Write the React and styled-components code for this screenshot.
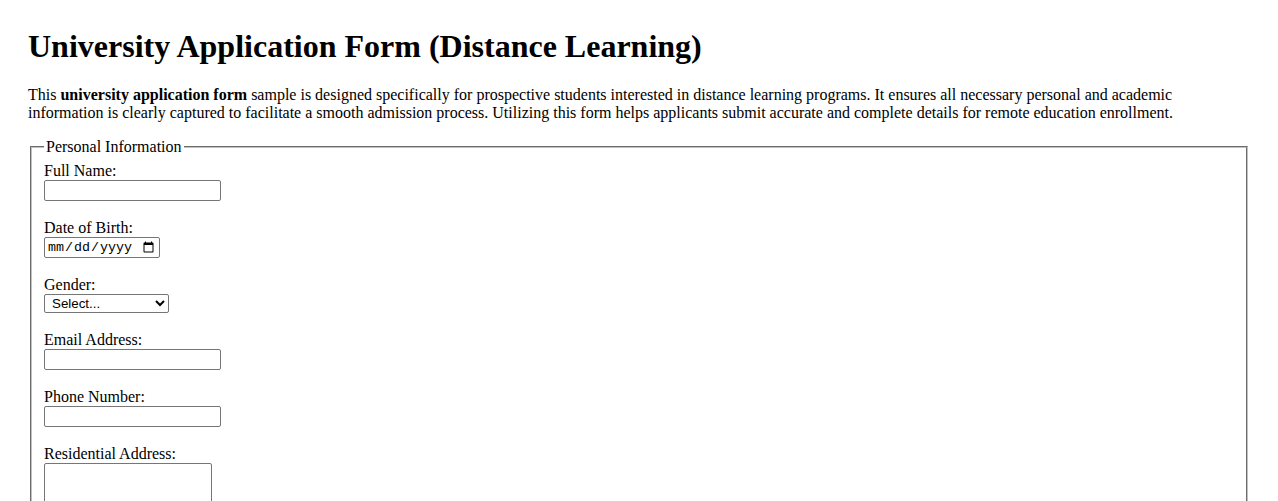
import React from 'react'
import styled, { createGlobalStyle } from 'styled-components'

const GlobalStyle = createGlobalStyle`
  body {
    margin: 0;
    background: #fff;
    color: #000;
    font-family: "Liberation Serif", "Times New Roman", serif;
    font-size: 16px;
  }
`

const personalFields = [
  { id: 'fullName', label: 'Full Name:', kind: 'text' },
  { id: 'dob', label: 'Date of Birth:', kind: 'date' },
  { id: 'gender', label: 'Gender:', kind: 'select' },
  { id: 'email', label: 'Email Address:', kind: 'email' },
  { id: 'phone', label: 'Phone Number:', kind: 'tel' },
  { id: 'address', label: 'Residential Address:', kind: 'textarea' },
]

const academicFields = [
  { id: 'school', label: 'Previous Institution:', kind: 'text' },
  { id: 'qualification', label: 'Highest Qualification:', kind: 'text' },
  { id: 'program', label: 'Intended Program:', kind: 'text' },
]

const App = () => {
  return (
    <Page>
      <GlobalStyle />
      <Title>University Application Form (Distance Learning)</Title>
      <Intro>
        This <strong>university application form</strong> sample is designed specifically for prospective
        students interested in distance learning programs. It ensures all necessary personal and academic
        information is clearly captured to facilitate a smooth admission process. Utilizing this form helps
        applicants submit accurate and complete details for remote education enrollment.
      </Intro>

      <form onSubmit={ e => e.preventDefault() }>
        <Section>
          <Legend>Personal Information</Legend>
          { personalFields.map( field => <Field key={ field.id } { ...field }/> ) }
        </Section>

        <Section>
          <Legend>Academic Information</Legend>
          { academicFields.map( field => <Field key={ field.id } { ...field }/> ) }
        </Section>
      </form>
    </Page>
  )
}

const Field = ( { id, label, kind } ) => {
  let control
  if ( kind === 'select' ) {
    control = (
      <Select id={ id } defaultValue="">
        <option value="">Select...</option>
        <option value="female">Female</option>
        <option value="male">Male</option>
        <option value="other">Other</option>
      </Select>
    )
  } else if ( kind === 'textarea' ) {
    control = <TextArea id={ id }/>
  } else if ( kind === 'date' ) {
    control = <DateInput id={ id } type="date"/>
  } else {
    control = <TextInput id={ id } type={ kind }/>
  }

  return (
    <FieldGroup>
      <Label htmlFor={ id }>{ label }</Label>
      { control }
    </FieldGroup>
  )
}

const Page = styled.div`
  padding: 28px;
`
const Title = styled.h1`
  margin: 0 0 21px;
  font-size: 32px;
  font-weight: bold;
  line-height: 37px;
`
const Intro = styled.p`
  margin: 0 0 16px;
  line-height: 18px;
`
const Section = styled.fieldset`
  margin: 0 2px 16px;
  padding: 6px 12px 10px;
  border: 2px groove #c0c0c0;
`
const Legend = styled.legend`
  padding: 0 2px;
  line-height: 18px;
`
const FieldGroup = styled.div`
  margin-bottom: 18px;
`
const Label = styled.label`
  display: block;
  line-height: 18px;
`
const controlBase = `
  display: block;
  box-sizing: border-box;
  margin: 0;
  border: 1px solid #767676;
  border-radius: 2px;
  background: #fff;
  color: #000;
`
const TextInput = styled.input`
  ${ controlBase }
  width: 177px;
  height: 21px;
  padding: 1px 2px;
  font: 13.33px "Liberation Sans", Arial, sans-serif;
`
const DateInput = styled.input`
  ${ controlBase }
  width: 116px;
  height: 21px;
  padding: 1px 2px;
  font: 13.33px "Liberation Mono", "Courier New", monospace;
`
const Select = styled.select`
  ${ controlBase }
  width: 125px;
  height: 19px;
  padding: 0 0 0 3px;
  font: 13.33px "Liberation Sans", Arial, sans-serif;
`
const TextArea = styled.textarea`
  ${ controlBase }
  width: 168px;
  height: 50px;
  padding: 2px;
  resize: both;
  font: 13.33px "Liberation Mono", "Courier New", monospace;
`

export default App
